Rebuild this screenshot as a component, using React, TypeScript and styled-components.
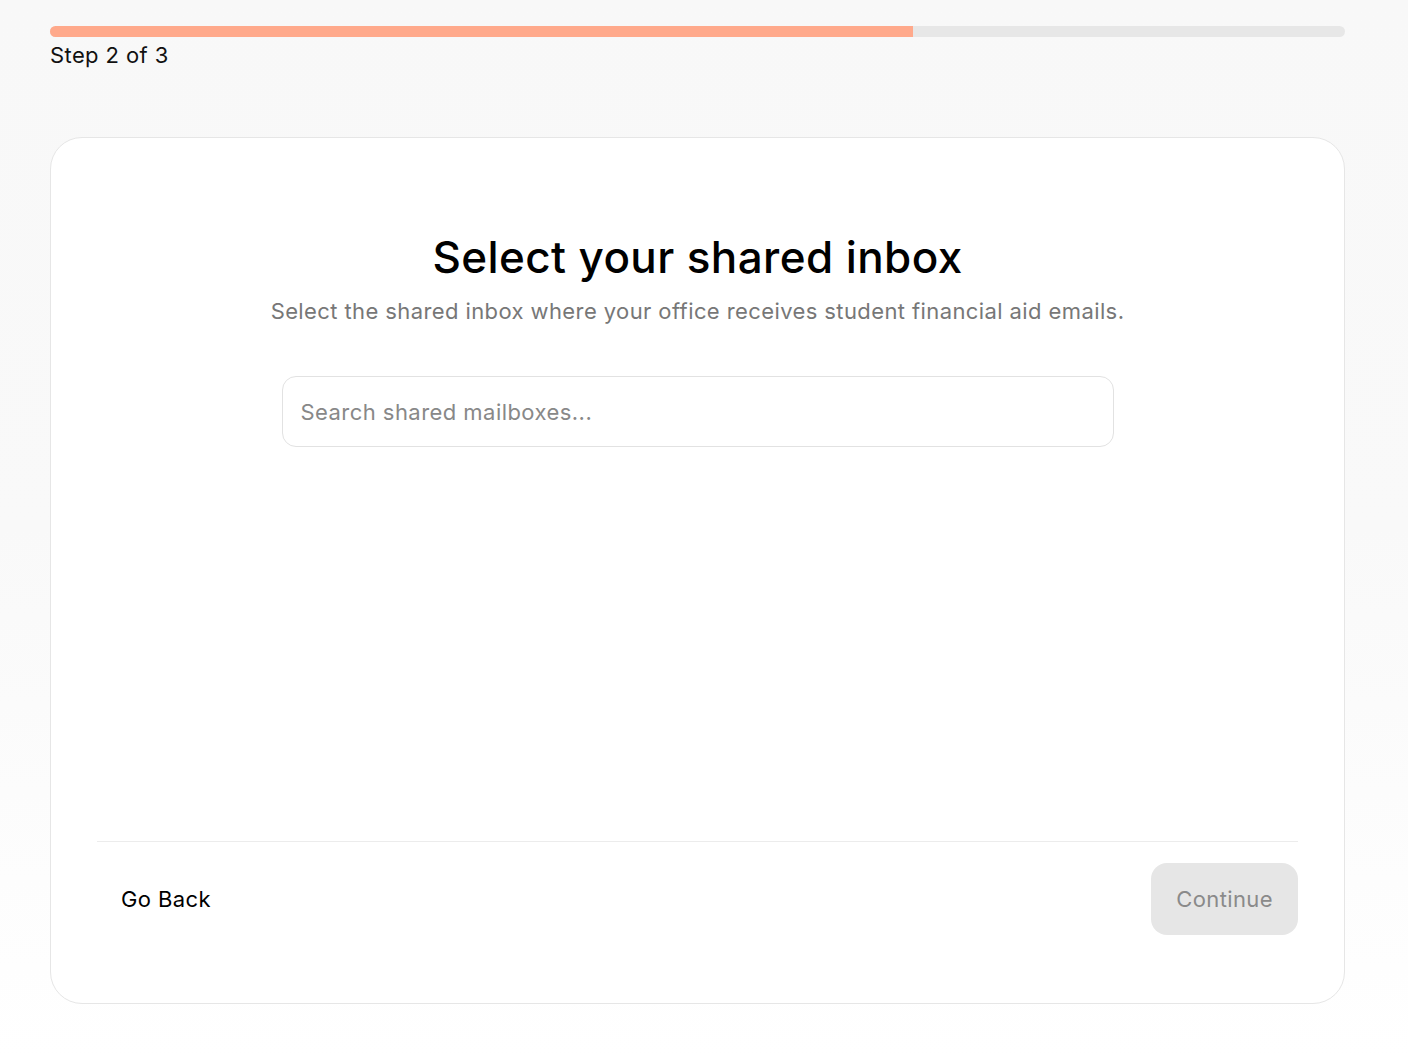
import React from "react";
import styled, { createGlobalStyle } from "styled-components";

const Global = createGlobalStyle`
  html, body { margin: 0; padding: 0; }
  body {
    font-family: Inter, "Noto Sans", sans-serif;
    background: linear-gradient(180deg, #f8f8f8 0%, #f9f9f9 50%, #ffffff 100%);
    min-height: 1056px;
    color: #000;
  }
`;

const Page = styled.div`
  width: 1408px;
  min-height: 1056px;
  box-sizing: border-box;
  padding: 26px 63px 0 50px;
  display: flex;
  flex-direction: column;
`;

const Track = styled.div`
  height: 11px;
  border-radius: 6px;
  background: #e7e7e7;
  overflow: hidden;
`;

const Fill = styled.div`
  height: 100%;
  background: #ffa98b;
`;

const StepLabel = styled.div`
  margin-top: 5px;
  font-size: 22px;
  line-height: 26px;
  letter-spacing: 0.4px;
  color: #111;
`;

const Card = styled.div`
  margin-top: 69px;
  height: 867px;
  box-sizing: border-box;
  background: #fff;
  border: 1px solid #e6e6e6;
  border-radius: 32px;
  padding: 0 46px;
  display: flex;
  flex-direction: column;
`;

const Body = styled.div`
  flex: 1;
  display: flex;
  flex-direction: column;
  align-items: center;
  padding-top: 93px;
`;

const Title = styled.h1`
  margin: 0;
  font-size: 44px;
  line-height: 52px;
  font-weight: 500;
  letter-spacing: 0.4px;
  color: #000;
`;

const Subtitle = styled.p`
  margin: 14px 0 0;
  font-size: 22px;
  line-height: 28px;
  letter-spacing: 0.4px;
  color: #777;
`;

const Search = styled.input`
  margin-top: 51px;
  width: 832px;
  height: 71px;
  box-sizing: border-box;
  border: 1px solid #e2e2e2;
  border-radius: 14px;
  padding: 0 18px;
  font-family: inherit;
  font-size: 22px;
  letter-spacing: 0.45px;
  color: #222;
  outline: none;
  caret-color: #000;
  &::placeholder { color: #888; }
`;

const Footer = styled.div`
  border-top: 1px solid #ececec;
  padding: 21px 0 68px;
  display: flex;
  justify-content: space-between;
  align-items: center;
`;

const Button = styled.button<{ $variant?: "ghost" | "disabled" }>`
  height: 72px;
  padding: 0 ${(p) => (p.$variant === "disabled" ? "25px" : "24px")};
  border: none;
  border-radius: 16px;
  font-family: inherit;
  font-size: 22px;
  letter-spacing: 0.4px;
  background: ${(p) => (p.$variant === "disabled" ? "#e6e6e6" : "transparent")};
  color: ${(p) => (p.$variant === "disabled" ? "#8a8a8a" : "#000")};
  cursor: pointer;
`;

export default function App() {
  const progress = 2 / 3;
  return (
    <>
      <Global />
      <Page>
        <Track>
          <Fill style={{ width: `${progress * 100}%` }} />
        </Track>
        <StepLabel>Step 2 of 3</StepLabel>
        <Card>
          <Body>
            <Title>Select your shared inbox</Title>
            <Subtitle>
              Select the shared inbox where your office receives student financial aid emails.
            </Subtitle>
            <Search placeholder="Search shared mailboxes..." autoFocus />
          </Body>
          <Footer>
            <Button $variant="ghost">Go Back</Button>
            <Button $variant="disabled" disabled>
              Continue
            </Button>
          </Footer>
        </Card>
      </Page>
    </>
  );
}
